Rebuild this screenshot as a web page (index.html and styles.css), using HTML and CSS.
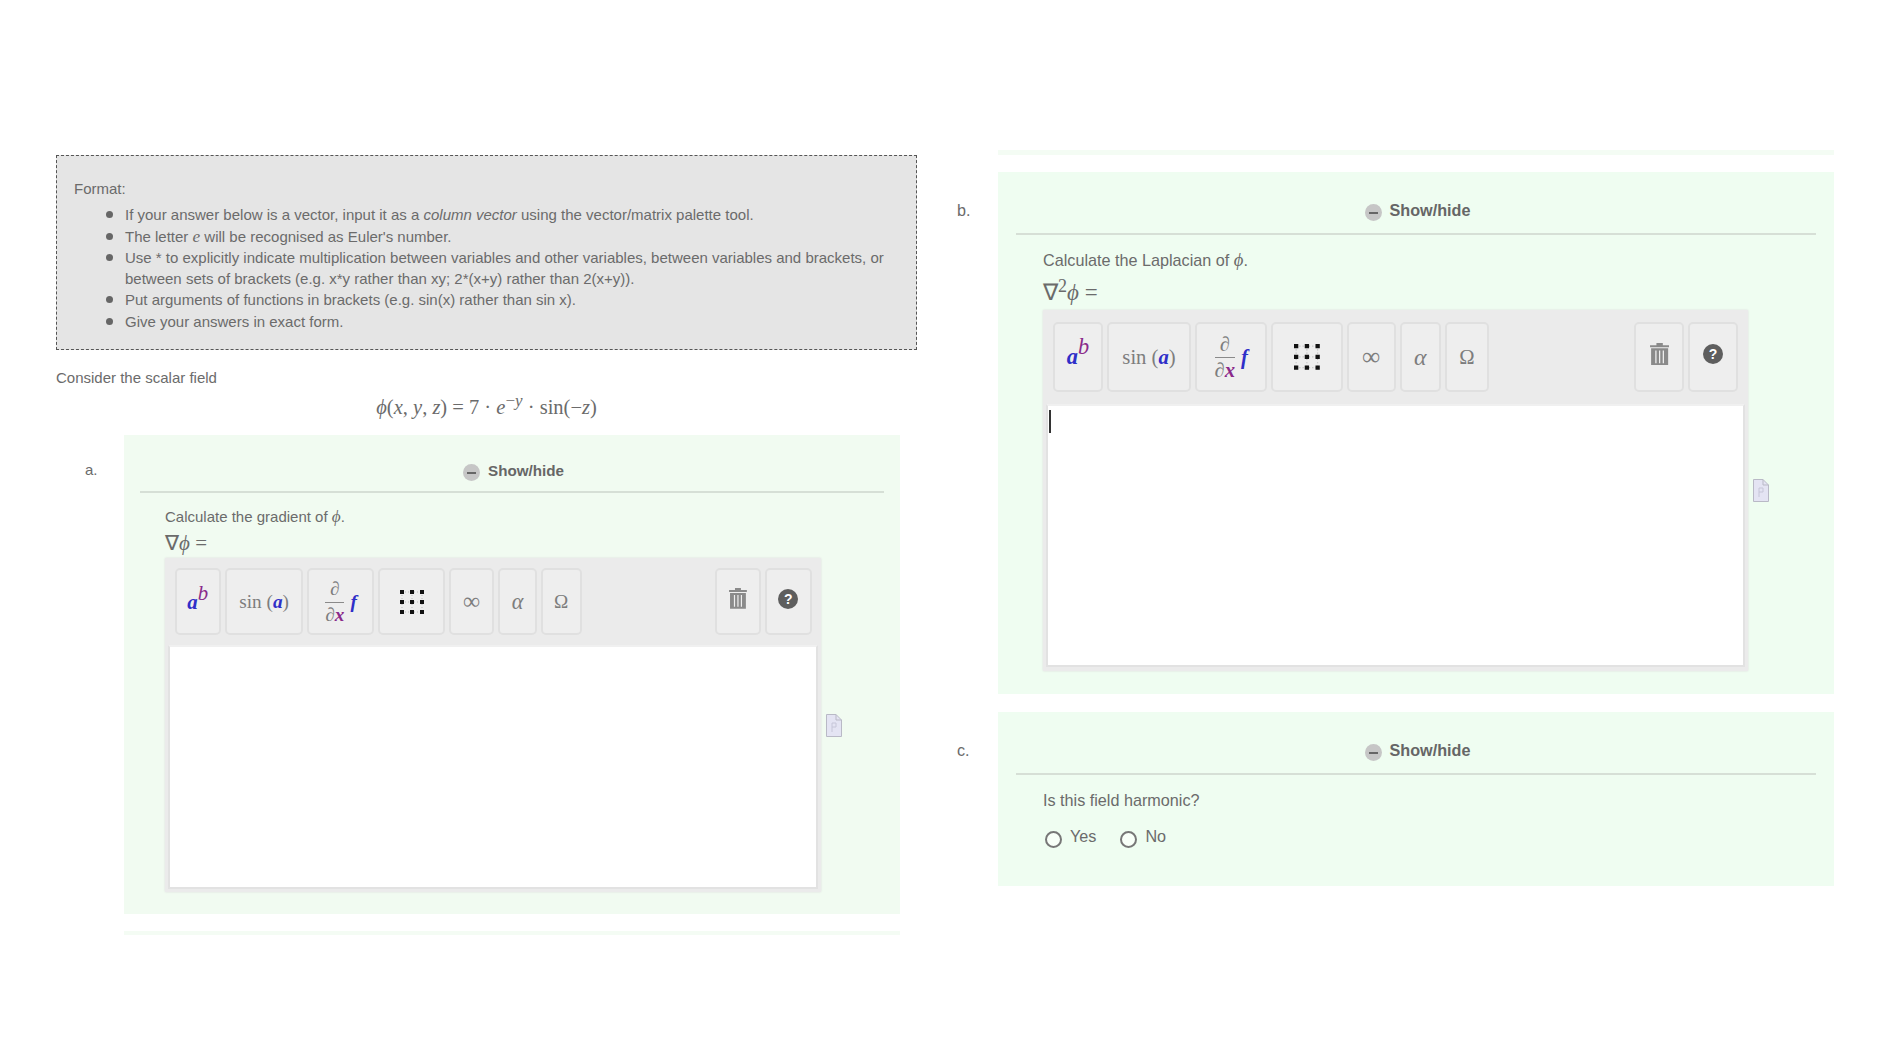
FILE: index.html
```html
<!DOCTYPE html>
<html>
<head>
<meta charset="utf-8">
<title>Scalar field</title>
<link rel="stylesheet" href="styles.css">
</head>
<body>
<div class="page">
	<div class="col left">
		<div class="format">
			<p>Format:</p>
			<ul>
				<li>If your answer below is a vector, input it as a <em>column vector</em> using the vector/matrix palette tool.</li>
				<li>The letter <span class="m">e</span> will be recognised as Euler's number.</li>
				<li>Use * to explicitly indicate multiplication between variables and other variables, between variables and brackets, or between sets of brackets (e.g. x*y rather than xy; 2*(x+y) rather than 2(x+y)).</li>
				<li>Put arguments of functions in brackets (e.g. sin(x) rather than sin x).</li>
				<li>Give your answers in exact form.</li>
			</ul>
		</div>
		<p class="intro">Consider the scalar field</p>
		<div class="equation"><span class="m">ϕ</span>(<span class="m">x</span>, <span class="m">y</span>, <span class="m">z</span>) = 7 · <span class="m">e</span><sup>−<span class="m">y</span></sup> · sin(−<span class="m">z</span>)</div>

		<div class="part">
			<div class="label">a.</div>
			<div class="panel">
				<div class="head"><span class="toggle"></span>Show/hide</div>
				<div class="body">
					<p class="ask">Calculate the gradient of <span class="m">ϕ</span>.</p>
					<div class="lhs">∇<span class="m">ϕ</span> =</div>
					<div class="answer">
						<div class="tool">
							<div class="bar">
								<div class="key w-pow"><span><span class="m blue">a</span><sup class="m plum">b</sup></span></div>
								<div class="key w-sin"><span>sin (<span class="m blue">a</span>)</span></div>
								<div class="key w-der"><span class="frac"><span class="top">∂</span><span>∂<span class="m plum bold">x</span></span></span><span class="m blue">f</span></div>
								<div class="key w-grid">
									<svg class="grid" viewBox="0 0 24 24"><path d="M2 2H22M2 12H22M2 22H22M2 2V22M12 2V22M22 2V22" stroke="#bbb" stroke-dasharray="1 2"/><path d="M0 0h4v4H0zM10 0h4v4h-4zM20 0h4v4h-4zM0 10h4v4H0zM10 10h4v4h-4zM20 10h4v4h-4zM0 20h4v4H0zM10 20h4v4h-4zM20 20h4v4h-4z" fill="#111"/></svg>
								</div>
								<div class="key w-inf">∞</div>
								<div class="key w-alpha m">α</div>
								<div class="key w-omega">Ω</div>
								<div class="key w-trash push">
									<svg class="raise trash" viewBox="0 0 18 21"><path d="M6 0h6v2h6v2H0V2h6zM1 5h16v16H1z" fill="#8a8a8a"/><path d="M5.500 7v12M9 7v12M12.500 7v12" stroke="#eee" stroke-width="1.200"/></svg>
								</div>
								<div class="key w-help"><span class="help raise">?</span></div>
							</div>
							<div class="editor"></div>
						</div>
						<svg class="file" viewBox="0 0 16 23"><path d="M.5.500H10L15.500 6V22.500H.5z" fill="#e4e4f3" stroke="#b9b9c6"/><path d="M10 .5V6H15.500" fill="none" stroke="#b9b9c6"/><path d="M6 18V9H10V13H6" fill="none" stroke="#c6c6d8"/></svg>
					</div>
				</div>
			</div>
		</div>
		<div class="part strip-row">
			<div class="label"></div>
			<div class="strip"></div>
		</div>
	</div>

	<div class="col right">
		<div class="part strip-row">
			<div class="label"></div>
			<div class="strip"></div>
		</div>
		<div class="part">
			<div class="label">b.</div>
			<div class="panel">
				<div class="head"><span class="toggle"></span>Show/hide</div>
				<div class="body">
					<p class="ask">Calculate the Laplacian of <span class="m">ϕ</span>.</p>
					<div class="lhs">∇<sup>2</sup><span class="m">ϕ</span> =</div>
					<div class="answer">
						<div class="tool">
							<div class="bar">
								<div class="key w-pow"><span><span class="m blue">a</span><sup class="m plum">b</sup></span></div>
								<div class="key w-sin"><span>sin (<span class="m blue">a</span>)</span></div>
								<div class="key w-der"><span class="frac"><span class="top">∂</span><span>∂<span class="m plum bold">x</span></span></span><span class="m blue">f</span></div>
								<div class="key w-grid">
									<svg class="grid" viewBox="0 0 24 24"><path d="M2 2H22M2 12H22M2 22H22M2 2V22M12 2V22M22 2V22" stroke="#bbb" stroke-dasharray="1 2"/><path d="M0 0h4v4H0zM10 0h4v4h-4zM20 0h4v4h-4zM0 10h4v4H0zM10 10h4v4h-4zM20 10h4v4h-4zM0 20h4v4H0zM10 20h4v4h-4zM20 20h4v4h-4z" fill="#111"/></svg>
								</div>
								<div class="key w-inf">∞</div>
								<div class="key w-alpha m">α</div>
								<div class="key w-omega">Ω</div>
								<div class="key w-trash push">
									<svg class="raise trash" viewBox="0 0 18 21"><path d="M6 0h6v2h6v2H0V2h6zM1 5h16v16H1z" fill="#8a8a8a"/><path d="M5.500 7v12M9 7v12M12.500 7v12" stroke="#eee" stroke-width="1.200"/></svg>
								</div>
								<div class="key w-help"><span class="help raise">?</span></div>
							</div>
							<div class="editor"><span class="caret"></span></div>
						</div>
						<svg class="file" viewBox="0 0 16 23"><path d="M.5.500H10L15.500 6V22.500H.5z" fill="#e4e4f3" stroke="#b9b9c6"/><path d="M10 .5V6H15.500" fill="none" stroke="#b9b9c6"/><path d="M6 18V9H10V13H6" fill="none" stroke="#c6c6d8"/></svg>
					</div>
				</div>
			</div>
		</div>
		<div class="part">
			<div class="label">c.</div>
			<div class="panel short">
				<div class="head"><span class="toggle"></span>Show/hide</div>
				<div class="body">
					<p class="ask">Is this field harmonic?</p>
					<div class="choices">
						<span class="radio"></span><span class="choice">Yes</span>
						<span class="radio"></span><span class="choice">No</span>
					</div>
				</div>
			</div>
		</div>
	</div>
</div>
</body>
</html>
```

FILE: styles.css
```css
html,body{margin:0;background:#fff}
body{font-family:"Liberation Sans",Arial,sans-serif;color:#6b6b6b}
p{margin:0}
sup{line-height:0}
.m{font-family:"Liberation Serif","DejaVu Serif",serif;font-style:italic;font-size:1.150em;line-height:0}
.blue{color:#2f2fc8;font-weight:bold}
.plum{color:#8a2a8a}
.bold{font-weight:bold}

.page{display:flex;align-items:flex-start;height:1052px;box-sizing:border-box;padding:150px 0 0 56px;overflow:hidden}
.col{font-size:15px}
.col.left{width:861px;padding-top:5px;--key:16px;--key-h:67px;--key-gap:4px}
.col.right{margin-left:40px;width:877px;font-size:16.200px;--key:17.200px;--key-h:70px;--key-gap:4px}

.format{box-sizing:border-box;height:195px;border:1px dashed #555;background:#e5e5e5;padding:22px 20px 0 17px;line-height:21.300px}
.format ul{margin:5px 0 0;padding:0 0 0 51px;list-style:none}
.format li{position:relative}
.format li::before{content:"";position:absolute;left:-19px;top:7px;width:7px;height:7px;border-radius:50%;background:#666}
.intro{margin-top:18px;line-height:20px}
.equation{margin:7px 0 16px;height:24px;line-height:24px;font-family:"Liberation Serif",serif;font-size:20.500px;text-align:center}
.equation .m{font-size:1em}
.equation sup{font-size:17px;vertical-align:8px}

.part{display:flex;align-items:flex-start}
.left .part{padding-left:29px}
.label{box-sizing:border-box;width:39px;flex:none;padding-top:25px;line-height:20px}
.right .label{width:41px;padding-top:28px}
.panel{background:#f1fbf1;width:776px;height:479px;box-sizing:border-box;padding:0 16px}
.right .panel{background:#effdf1;width:836px;height:522px;padding:0 18px;margin-bottom:18px}
.right .panel.short{height:174px;margin:0}
.strip-row{height:4px}
.left .strip-row{margin-top:17px}
.right .strip-row{height:5px;margin-bottom:17px}
.strip{width:776px;height:100%;background:#f4fcf4}
.right .strip{width:836px}

.head{height:58px;box-sizing:border-box;padding:24px 0 0 3px;line-height:20px;font-size:15.200px;font-weight:bold;text-align:center;border-bottom:2px solid #d6dfd6;color:#666}
.right .head{height:63px;padding-top:27px;font-size:16.200px}
.toggle{display:inline-block;position:relative;top:5px;width:17px;height:17px;border-radius:50%;background:#c6c6c6;margin-right:8px}
.toggle::after{content:"";position:absolute;left:4px;right:4px;top:8px;height:2px;background:#666}

.body{padding:0 0 0 25px}
.right .body{padding-left:27px}
.ask{margin-top:14px;line-height:20px}
.right .ask{margin-top:15px}
.lhs{margin-top:6px;line-height:20px;font-family:"Liberation Serif",serif;font-size:21px}
.right .lhs{margin-top:11px;line-height:24px;font-size:23px}
.lhs .m{font-size:1em}
.lhs sup{font-size:18px;vertical-align:8px}

.answer{display:flex;align-items:center;gap:5px;margin-top:5px}
.tool{box-sizing:border-box;width:656px;height:334px;background:#ebebeb;padding:10px 3px 3px;display:flex;flex-direction:column;box-shadow:0 0 2px #ddd}
.right .tool{width:705px;height:361px;padding:12px 3px 4px}
.bar{display:flex;gap:var(--key-gap);padding:0 6.500px;margin-bottom:10px;font-size:calc(var(--key)*1.2)}
.right .bar{margin-bottom:11.500px;padding:0 7px}

.key{box-sizing:border-box;height:var(--key-h);display:flex;align-items:center;justify-content:center;background:#eee;border:2px solid #e0e0e0;border-radius:5px;font-family:"Liberation Serif",serif;color:#7d7d7d}
.key .m{font-size:1em}
.push{margin-left:auto}
.raise{position:relative;top:-3px}
.w-pow{width:calc(var(--key)*2.9);font-size:calc(var(--key)*1.300)}
.w-pow sup{vertical-align:.45em;font-size:1.050em}
.w-sin{width:calc(var(--key)*4.9)}
.w-der{width:calc(var(--key)*4.2);gap:6px}
.w-grid{width:calc(var(--key)*4.150)}
.w-inf{width:calc(var(--key)*2.840);font-size:calc(var(--key)*1.500)}
.w-alpha{width:calc(var(--key)*2.400)}
.w-omega{width:calc(var(--key)*2.560)}
.w-trash{width:calc(var(--key)*2.900)}
.w-help{width:calc(var(--key)*2.900)}
.grid{width:calc(var(--key)*1.500);height:calc(var(--key)*1.500)}
.trash{width:calc(var(--key)*1.120);height:calc(var(--key)*1.300)}
.frac{display:flex;flex-direction:column;align-items:center;line-height:22px}
.top{border-bottom:1.500px solid #8a8a8a;padding:0 5px 2px;margin-bottom:1px}
.help{display:block;width:20px;height:20px;border-radius:50%;background:#5e5e5e;color:#fff;font:bold 14px/20px "Liberation Sans",sans-serif;text-align:center}

.editor{flex:1;background:#fff;border:2px solid #e2e2e2;border-top-color:#f0f0f0;padding:4px 1px;box-sizing:border-box}
.caret{display:block;width:2px;height:23px;background:#333}
.file{width:16px;height:23px;flex:none}

.choices{display:flex;align-items:flex-start;margin-top:16px;padding-left:2px}
.radio{box-sizing:border-box;width:17px;height:17px;margin-top:5px;border:2px solid #777;border-radius:50%;background:#f8fff8}
.choice{margin:0 24px 0 8px;line-height:20px}
```
